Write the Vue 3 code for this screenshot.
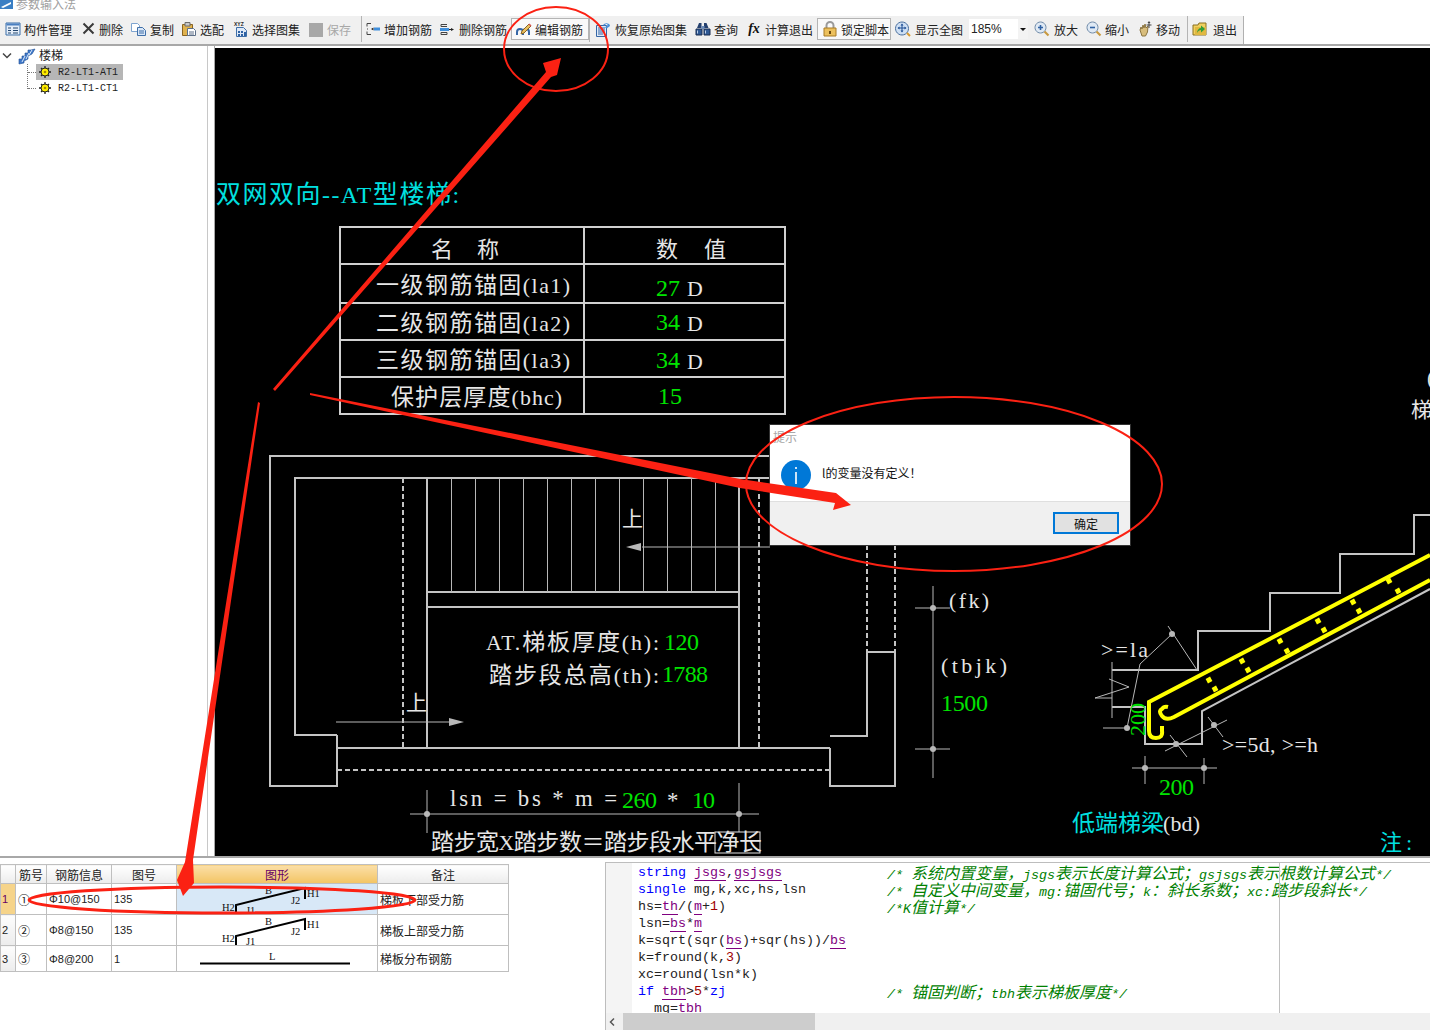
<script setup>
// icon shapes on a 16px grid: d = path, f = fill, s = stroke, w = stroke width
const icons = {
  manage: [
    { d: 'M1 2h14v12H1z', f: '#e4edf8', s: '#3a6ea8' },
    { d: 'M1.5 2.5h13v2h-13z', f: '#4a7fc0' },
    { d: 'M3 7h3M3 9.5h3M3 12h3M8 7h5M8 9.5h5M8 12h5', s: '#23466f' }
  ],
  del: [{ d: 'M2.5 2.5l10 10M12.5 2.5l-10 10', s: '#3a3a3a', w: 2 }],
  copy: [
    { d: 'M.5 2.5h6l2 2v6h-8z', f: '#fff', s: '#7ea4d0' },
    { d: 'M6.5 6.5h5l3 3v5h-8z', f: '#d9e7f8', s: '#3f6fa8' },
    { d: 'M8 10h5M8 12h5', s: '#3f6fa8' }
  ],
  pick: [
    { d: 'M1.5 3.5h10v11h-10z', f: '#e0b24e', s: '#8a6420' },
    { d: 'M4 1.5h5v3.5H4z', f: '#c9c9c9', s: '#6d6d6d' },
    { d: 'M6.5 7.5h6l2 2v5h-8z', f: '#fff', s: '#5c6f88' },
    { d: 'M8 11h5M8 13h5', s: '#5c6f88' }
  ],
  atlas: [
    { d: 'M3.5 6.5h7l3 3v6h-10z', f: '#dfe9f6', s: '#3f6fa8' },
    { d: 'M5 10h2v2H5zM8 10h2v2H8zM5 13h2v2H5zM8 13h2v2H8zM11 11h2v4h-2z', f: '#2f62a4' }
  ],
  save: [{ d: 'M1 2h14v14H1z', f: '#a8a8a8' }],
  addBar: [
    { d: 'M6 2.500H2v3M2 10.500v3h4M2 8h1', s: '#444' },
    { d: 'M6 8l2.500-1.500v3z', f: '#222' },
    { d: 'M9 6.500h6v3H9z', f: '#3f8fdc' }
  ],
  delBar: [
    { d: 'M9 3.500H3v2h6M3 11.500h6v2H3z', s: '#444' },
    { d: 'M2 7h9v3H2z', f: '#3f8fdc' },
    { d: 'M11 8.500h3', s: '#222' },
    { d: 'M16 8.500l-3-1.500v3z', f: '#222' }
  ],
  edit: [
    { d: 'M1 14v-3a3 3 0 0 1 6 0v3M7 14v-3a3 3 0 0 1 6 0v3', s: '#3566a6', w: 2 },
    { d: 'M6 10l7-7 2 2-7 7-3 1z', f: '#e8c060', s: '#8a6420' },
    { d: 'M12.500 3.500l1-1 2 2-1 1z', f: '#d9534f' }
  ],
  restore: [
    { d: 'M1.500 4.500h10v11h-10z', f: '#dfe9f6', s: '#3566a6' },
    { d: 'M3 7h7M3 9h7M3 11h7M3 13h5', s: '#3566a6' },
    { d: 'M8 4a4 3.500 0 0 1 7 0c0 2-2 2-3 3.500l-2-1c1-1.500 2.500-1.500 2.500-2.500 0-1.500-2.500-1-2.500.5z', f: '#4a90d9' }
  ],
  search: [
    { d: 'M2 7l2-5h2.500v5M13.500 7l-2-5H9v5', f: '#24406e' },
    { d: 'M1 8h6v6H1zM9 8h6v6H9z', f: '#2e5894', s: '#1a2f52' },
    { d: 'M6.500 5h3v3h-3z', f: '#6c8cb8' },
    { d: 'M2.500 9.500v3M10.500 9.500v3', s: '#bcd0ea' }
  ],
  lock: [
    { d: 'M4.500 7V4.500a3.500 3.500 0 0 1 7 0V7', s: '#9a9a9a', w: 2 },
    { d: 'M2 7h12v8H2z', f: '#ecc05c', s: '#a87a24' },
    { d: 'M7 10h2v3H7z', f: '#6a4a10' }
  ],
  full: [
    { d: 'M7 1a6.500 6.500 0 1 0 .01 0z', f: '#cfe0f4', s: '#4a6f9e' },
    { d: 'M7 3.500v7M3.500 7h7', s: '#1f4f94' },
    { d: 'M7 2.500l1.500 2h-3zM7 11.500l1.500-2h-3zM2.500 7l2-1.500v3zM11.500 7l-2-1.500v3z', f: '#1f4f94' },
    { d: 'M12 12l3 3', s: '#d89a30', w: 2 }
  ],
  zoomIn: [
    { d: 'M6.500 1a5.500 5.500 0 1 0 .01 0z', f: '#dfe9f4', s: '#6f8aa8' },
    { d: 'M4 6.500h5M6.500 4v5', s: '#2f62a4', w: 1.600 },
    { d: 'M10.500 10.500l4 4', s: '#c99a40', w: 2.200 }
  ],
  zoomOut: [
    { d: 'M6.500 1a5.500 5.500 0 1 0 .01 0z', f: '#dfe9f4', s: '#6f8aa8' },
    { d: 'M4 6.500h5', s: '#2f62a4', w: 1.600 },
    { d: 'M10.500 10.500l4 4', s: '#c99a40', w: 2.200 }
  ],
  move: [
    { d: 'M3 9l1-3 1 2 1-4 1 3 1-4 1 4 2-2-.5 6-2 4H5z', f: '#d8bd7c', s: '#8a7440' },
    { d: 'M12 1v6M9.500 4h5', s: '#444' },
    { d: 'M12 0l1.500 2h-3z', f: '#444' }
  ],
  quit: [
    { d: 'M1 4h5l1-2h7v12H1z', f: '#f0d060', s: '#8a7020' },
    { d: 'M3 6h11v8H3z', f: '#e0b840' },
    { d: 'M5 12c0-3 2-5 4-5V4.500L13 8l-4 3.500V9c-1.500 0-3 1-4 3z', f: '#2f9e3a' }
  ]
}

const tools = [
  { label: '构件管理', icon: 'manage', w: 76 },
  { label: '删除', icon: 'del', w: 50, gap: 2 },
  { label: '复制', icon: 'copy', w: 50 },
  { label: '选配', icon: 'pick', w: 52 },
  { label: '选择图集', icon: 'atlas', w: 75, tag: 'XYZ' },
  { label: '保存', icon: 'save', w: 53, off: true },
  { sep: true, w: 4 },
  { label: '增加钢筋', icon: 'addBar', w: 73 },
  { label: '删除钢筋', icon: 'delBar', w: 73, gap: 5 },
  { label: '编辑钢筋', icon: 'edit', w: 78, on: true },
  { sep: true, w: 6 },
  { label: '恢复原始图集', icon: 'restore', w: 100, gap: 4 },
  { label: '查询', icon: 'search', w: 51 },
  { label: '计算退出', w: 71, fx: true },
  { label: '锁定脚本', icon: 'lock', w: 74, on: true },
  { label: '显示全图', icon: 'full', w: 74, ml: 4, gap: 4 },
  { combo: '185%', w: 59 },
  { label: '放大', icon: 'zoomIn', w: 52, ml: 6, gap: 4 },
  { label: '缩小', icon: 'zoomOut', w: 51 },
  { label: '移动', icon: 'move', w: 50 },
  { sep: true, w: 5 },
  { label: '退出', icon: 'quit', w: 51, gap: 5 }
]

const bars = [
  { no: 1, mark: '①', info: 'Φ10@150', code: '135', shape: 'bent', note: '梯板下部受力筋', active: true },
  { no: 2, mark: '②', info: 'Φ8@150', code: '135', shape: 'bent', note: '梯板上部受力筋' },
  { no: 3, mark: '③', info: 'Φ8@200', code: '1', shape: 'line', note: '梯板分布钢筋' }
]

// [text, token class]
const code = [
  { t: [['string ', 'k'], ['jsgs', 'v'], [','], ['gsjsgs', 'v']], c: '/* 系统内置变量，jsgs表示长度计算公式；gsjsgs表示根数计算公式*/' },
  { t: [['single ', 'k'], ['mg,k,xc,hs,lsn']], c: '/* 自定义中间变量，mg:锚固代号；k：斜长系数；xc:踏步段斜长*/' },
  { t: [['hs='], ['th', 'v'], ['/('], ['m', 'v'], ['+'], ['1', 'n'], [')']], c: '/*K值计算*/' },
  { t: [['lsn='], ['bs', 'v'], ['*'], ['m', 'v']] },
  { t: [['k=sqrt(sqr('], ['bs', 'v'], [')+sqr(hs))/'], ['bs', 'v']] },
  { t: [['k=fround(k,'], ['3', 'n'], [')']] },
  { t: [['xc=round(lsn*k)']] },
  { t: [['if ', 'k'], ['tbh', 'v'], ['>'], ['5', 'n'], ['*'], ['zj', 'k']], c: '/* 锚固判断；tbh表示梯板厚度*/' },
  { t: [['  mg='], ['tbh', 'p']] }
]

// text mixes narrow latin with wider CJK, odd pieces are the CJK runs
const pieces = (text) => text.split(/([\u3000-\u9fff\uff00-\uffef]+)/)

const WHITE = '#e6e6e6'
const GREEN = '#00e400'
const CYAN = '#00e0e0'

// drawing text: text, x, baseline, fitted width, colour, size
const labels = [
  ['双网双向--AT型楼梯:', 216, 203, 243, CYAN, 25],
  ['名', 431, 257, 22, WHITE, 22],
  ['称', 477, 257, 22, WHITE, 22],
  ['数', 656, 257, 22, WHITE, 22],
  ['值', 704, 257, 22, WHITE, 22],
  ['一级钢筋锚固(la1)', 376, 293, 194, WHITE, 23],
  ['二级钢筋锚固(la2)', 376, 331, 194, WHITE, 23],
  ['三级钢筋锚固(la3)', 376, 368, 194, WHITE, 23],
  ['保护层厚度(bhc)', 391, 405, 171, WHITE, 23],
  ['27', 656, 296, 24, GREEN, 24],
  ['D', 687, 296, 12, WHITE, 23],
  ['34', 656, 330, 24, GREEN, 24],
  ['D', 687, 331, 12, WHITE, 23],
  ['34', 656, 368, 24, GREEN, 24],
  ['D', 687, 369, 12, WHITE, 23],
  ['15', 658, 404, 24, GREEN, 24],
  ['上', 622, 526, 21, WHITE, 21],
  ['上', 406, 710, 21, WHITE, 21],
  ['AT.梯板厚度(h):', 486, 650, 173, WHITE, 23],
  ['120', 664, 650, 35, GREEN, 24],
  ['踏步段总高(th):', 489, 683, 170, WHITE, 23],
  ['1788', 662, 682, 46, GREEN, 24],
  ['lsn = bs * m =', 450, 806, 167, WHITE, 24],
  ['260', 622, 808, 35, GREEN, 24],
  ['*', 667, 808, 12, WHITE, 24],
  ['10', 692, 808, 23, GREEN, 24],
  ['踏步宽X踏步数＝踏步段水平净长', 431, 850, 331, WHITE, 23],
  ['(fk)', 949, 608, 40, WHITE, 23],
  ['(tbjk)', 941, 673, 66, WHITE, 23],
  ['1500', 941, 711, 47, GREEN, 24],
  ['>=la', 1101, 657, 47, WHITE, 23],
  ['>=5d, >=h', 1222, 752, 96, WHITE, 23],
  ['200', 1159, 795, 35, GREEN, 24],
  ['低端梯梁', 1072, 831, 92, CYAN, 23],
  ['(bd)', 1163, 831, 37, WHITE, 23],
  ['注:', 1380, 850, 32, CYAN, 22],
  ['(', 1427, 385, 8, WHITE, 22],
  ['梯', 1411, 417, 20, WHITE, 21]
]

// plan and section outlines
const heavy = [
  '337,735 295,735 295,478 895,478',
  '337,735 337,786 270,786 270,456 895,456',
  '337,748 830,748',
  '427,478 427,748',
  '739,478 739,748',
  '427,592 739,592',
  '427,607 739,607',
  '830,748 830,786 895,786 895,652 867,652 867,736 830,736',
  '1112,670 1198,670 1198,631 1270,631 1270,593 1340,593 1340,554 1414,554 1414,515 1430,515',
  '1112,707 1145,707 1145,744 1202,744 1202,711 1430,589'
]
const dashed = [
  '403,478 403,748',
  '759,478 759,748',
  '759,748 830,748',
  '337,770 830,770',
  '867,545 867,652',
  '895,545 895,652'
]
const thin = [
  '642,547 770,547',
  '336,722 450,722',
  '427,790 427,833',
  '739,783 739,832',
  '410,814 759,814',
  '933,586 933,778',
  '915,608 950,608',
  '915,749 950,749',
  '1172,634 1140,664 1127,728',
  '1168,626 1197,670',
  '1103,728 1127,728',
  '1112,662 1112,718',
  '1109,679 1129,687 1095,698 1112,698',
  '1165,751 1227,720',
  '1170,735 1187,757',
  '1208,717 1223,737',
  '1132,768 1217,768',
  '1145,756 1145,784',
  '1204,758 1204,784'
]
const dots = [[427, 814], [739, 814], [933, 608], [933, 749], [1172, 634], [1127, 728], [1176, 744], [1214, 725], [1145, 768], [1204, 768]]
const treads = Array.from({ length: 12 }, (_, i) => 451.5 + i * 24)
const ties = [
  [1209, 680], [1215, 689], [1242, 661], [1248, 670], [1280, 641], [1287, 651],
  [1318, 621], [1324, 630], [1353, 602], [1359, 611], [1389, 581], [1398, 591]
]
</script>

<template>
  <div class="app">
    <div class="title-bar">
      <svg class="app-icon" width="13" height="9" viewBox="0 0 13 9">
        <path d="M0 0h13v9H0z" fill="#3b7fc4" />
        <path d="M1 7L11 2v2L3 8z" fill="#fff" />
      </svg>
      <span>参数输入法</span>
    </div>

    <div class="toolbar-wrap">
      <div class="toolbar">
        <template v-for="(tool, i) in tools" :key="i">
          <div v-if="tool.sep" class="sep" :style="{ width: tool.w + 'px' }"><i></i></div>
          <div v-else-if="tool.combo" class="combo" :style="{ width: tool.w + 'px' }">
            <span class="combo-val">{{ tool.combo }}</span>
            <span class="combo-btn"></span>
          </div>
          <div
            v-else
            class="tool"
            :class="{ on: tool.on, off: tool.off }"
            :style="{ width: tool.w + 'px', marginLeft: (tool.ml || 0) + 'px', gap: (tool.gap || 3) + 'px' }"
          >
            <span v-if="tool.fx" class="fx">fx</span>
            <svg v-else class="icon" width="16" height="16" viewBox="0 0 16 16">
              <path
                v-for="(p, n) in icons[tool.icon]"
                :key="n"
                :d="p.d"
                :fill="p.f || 'none'"
                :stroke="p.s || 'none'"
                :stroke-width="p.w || 1"
              />
              <text v-if="tool.tag" x="1" y="5" class="icon-tag">{{ tool.tag }}</text>
            </svg>
            <span>{{ tool.label }}</span>
          </div>
        </template>
      </div>
    </div>

    <div class="main">
      <aside class="tree">
        <div class="tree-root">
          <svg width="10" height="8" viewBox="0 0 10 8" class="chev"><path d="M1 1.500l4 4 4-4" fill="none" stroke="#444" stroke-width="1.500" /></svg>
          <svg width="18" height="17" viewBox="0 0 18 17">
            <path d="M1 16V11h3V8h3V5h3V2h3l4-1-3 5-4 2v3l-4 2v2z" fill="#3f78c9" stroke="#1f4f94" stroke-width=".6" />
            <path d="M4 14l3-6M8 11l3-6M11 7l3-5" stroke="#dce9f8" fill="none" />
          </svg>
          <span class="root-name">楼梯</span>
        </div>
        <div class="tree-kids">
          <div class="tree-node" v-for="(name, i) in ['R2-LT1-AT1', 'R2-LT1-CT1']" :key="name" :class="{ sel: i === 0 }">
            <svg width="12" height="12" viewBox="0 0 12 12">
              <path d="M6 0v12M0 6h12M2 2l8 8M10 2l-8 8" stroke="#222" stroke-width="1.300" />
              <circle cx="6" cy="6" r="4" fill="#ffee00" stroke="#222" />
              <circle cx="6" cy="6" r="1.300" fill="#a58a00" />
            </svg>
            <span>{{ name }}</span>
          </div>
        </div>
      </aside>

      <div class="canvas">
        <svg class="drawing" width="1215" height="808" viewBox="215 48 1215 808">
          <g fill="none" stroke="#c4c4c4" stroke-width="2">
            <polyline v-for="p in heavy" :key="p" :points="p" />
          </g>
          <g fill="none" stroke="#c4c4c4" stroke-width="2" stroke-dasharray="5 3">
            <polyline v-for="p in dashed" :key="p" :points="p" />
          </g>
          <g fill="none" stroke="#b8b8b8">
            <polyline v-for="p in thin" :key="p" :points="p" />
            <line v-for="x in treads" :key="x" :x1="x" y1="478" :x2="x" y2="592" />
          </g>
          <circle v-for="d in dots" :key="d[0] + '-' + d[1]" :cx="d[0]" :cy="d[1]" r="3" fill="#b8b8b8" />
          <path d="M626 547l15-4v8zM464 722l-15-4v8z" fill="#b8b8b8" />

          <g fill="none" stroke="#d0d0d0" stroke-width="2">
            <rect x="340" y="227" width="445" height="187" />
            <path d="M584 227V414M340 264H785M340 303H785M340 340H785M340 377H785" />
          </g>
          <rect x="715" y="832" width="45" height="21" fill="none" stroke="#e6e6e6" />

          <g fill="none" stroke="#ffff00" stroke-width="4">
            <path d="M1430 555L1149 702V731Q1149 738 1156 738T1162 731V726" />
            <path d="M1430 580L1174 717Q1166 721 1162 716T1162 709Q1164 706 1168 707" />
          </g>
          <rect
            v-for="t in ties"
            :key="t[0]"
            :x="t[0] - 2.500"
            :y="t[1] - 2.500"
            width="5"
            height="5"
            fill="#ffff00"
            :transform="`rotate(-28 ${t[0]} ${t[1]})`"
          />

          <text
            v-for="(l, i) in labels"
            :key="i"
            class="cad"
            :x="l[1]"
            :y="l[2]"
            :textLength="l[3]"
            lengthAdjust="spacing"
            :fill="l[4]"
            :font-size="l[5]"
          ><tspan v-for="(s, n) in pieces(l[0])" :key="n" :class="{ latin: n % 2 === 0 && l[4] !== GREEN }">{{ s }}</tspan></text>
          <text class="cad" transform="translate(1145 736) rotate(-90)" textLength="33" lengthAdjust="spacingAndGlyphs" fill="#00e400" font-size="22">200</text>
        </svg>
      </div>
    </div>

    <div class="hsplit"></div>

    <div class="bottom">
      <div class="grid-pane">
        <table class="grid">
          <colgroup>
            <col style="width: 15px" /><col style="width: 31px" /><col style="width: 65px" />
            <col style="width: 65px" /><col style="width: 201px" /><col style="width: 131px" />
          </colgroup>
          <thead>
            <tr>
              <th></th><th>筋号</th><th>钢筋信息</th><th>图号</th><th class="cur">图形</th><th>备注</th>
            </tr>
          </thead>
          <tbody>
            <tr v-for="r in bars" :key="r.no" :class="'row' + r.no">
              <th class="rowno" :class="{ cur: r.active }">{{ r.no }}</th>
              <td>{{ r.mark }}</td>
              <td class="num">{{ r.info }}</td>
              <td class="num">{{ r.code }}</td>
              <td class="shape" :class="{ picked: r.active }">
                <svg v-if="r.shape === 'bent'" width="200" height="30" viewBox="0 0 200 30">
                  <path d="M59 30V21L128 4V15" fill="none" stroke="#000" stroke-width="2" />
                  <text class="fig" x="45" y="27">H2</text>
                  <text class="fig" x="69" y="30">J1</text>
                  <text class="fig" x="88" y="10">B</text>
                  <text class="fig" x="114" y="20">J2</text>
                  <text class="fig" x="130" y="13">H1</text>
                </svg>
                <svg v-else width="200" height="25" viewBox="0 0 200 25">
                  <path d="M23 17.500H173" stroke="#000" stroke-width="2" />
                  <text class="fig" x="92" y="14">L</text>
                </svg>
              </td>
              <td class="note">{{ r.note }}</td>
            </tr>
          </tbody>
        </table>
      </div>

      <div class="code-pane">
        <div class="code-body">
          <div class="gutter"></div>
          <div class="code">
            <div v-for="(line, i) in code" :key="i" class="line">
              <div class="src"><span v-for="(tok, n) in line.t" :key="n" :class="tok[1]">{{ tok[0] }}</span></div>
              <div v-if="line.c" class="cmt"><span v-for="(s, n) in pieces(line.c)" :key="n" :class="{ cn: n % 2 === 1 }">{{ s }}</span></div>
            </div>
          </div>
          <i class="margin-line"></i>
        </div>
        <div class="hscroll">
          <svg width="8" height="10" viewBox="0 0 8 10"><path d="M6 1.500L2.500 5 6 8.500" fill="none" stroke="#555" stroke-width="1.500" /></svg>
          <div class="thumb"></div>
        </div>
      </div>
    </div>

    <div class="dialog">
      <div class="dlg-body">
        <div class="dlg-title">提示</div>
        <div class="dlg-msg">
          <svg width="30" height="30" viewBox="0 0 30 30">
            <circle cx="15" cy="15" r="15" fill="#0078d7" />
            <path d="M15 7v2M15 12v12" stroke="#fff" stroke-width="1.600" />
          </svg>
          <span class="dlg-text">l的变量没有定义！</span>
        </div>
      </div>
      <div class="dlg-foot"><button class="dlg-btn">确定</button></div>
    </div>

    <!-- hand drawn red marks on top of the whole screenshot -->
    <svg class="marks" width="1430" height="1030" viewBox="0 0 1430 1030">
      <g fill="none" stroke="#fb2113">
        <ellipse cx="556" cy="49" rx="52" ry="42" stroke-width="2" />
        <ellipse cx="954" cy="484" rx="208" ry="87" stroke-width="2" />
        <ellipse cx="222" cy="900" rx="193" ry="13" stroke-width="3" />
      </g>
      <g fill="#fb2113">
        <path d="M273 389L546 72 543 63 561 58 557 75 551 77 275 391z" />
        <path d="M258 402L185 862 177 880 183 896 194 883 193 860 260 403z" />
        <path d="M310 393L740 479 836 493 851 505 833 510 835 503 740 488 310 395z" />
      </g>
    </svg>
  </div>
</template>

<style>
body {
  background: #fff;
}
</style>

<style scoped>
.app {
  position: relative;
  width: 1430px;
  height: 1030px;
  overflow: hidden;
  display: flex;
  flex-direction: column;
  font-family: "Noto Sans CJK SC", "Liberation Sans", sans-serif;
  font-size: 12px;
  color: #222;
  background: #fff;
}

.title-bar {
  height: 16px;
  flex-shrink: 0;
  display: flex;
  align-items: flex-start;
  gap: 3px;
  overflow: hidden;
  line-height: 8px;
  color: #a0a0a0;
}

.toolbar-wrap {
  height: 28px;
  flex-shrink: 0;
  border-bottom: 2px solid #a8a8a8;
}

.toolbar {
  width: 1238px;
  height: 26px;
  padding: 0 0 2px 5px;
  background: #f0f0f0;
  border-right: 1px solid #b0b0b0;
  display: flex;
  align-items: center;
}

.tool {
  display: flex;
  align-items: center;
  height: 22px;
  flex-shrink: 0;
  white-space: nowrap;
  box-sizing: border-box;
}

.tool.on {
  border: 1px solid #b4b4b4;
  background: #f9f9f9;
  padding-left: 4px;
}

.tool.off {
  color: #a8a8a8;
}

.icon {
  flex-shrink: 0;
}

.icon-tag {
  font: bold 5px "Liberation Sans", sans-serif;
  fill: #222;
}

.fx {
  width: 16px;
  text-align: center;
  font: italic bold 14px "Liberation Serif", serif;
  color: #111;
}

.sep {
  height: 26px;
  flex-shrink: 0;
  display: flex;
}

.sep i {
  width: 1px;
  height: 100%;
  background: #b4b4b4;
}

.combo {
  height: 20px;
  flex-shrink: 0;
  background: #fff;
  display: flex;
  align-items: center;
  justify-content: space-between;
  font-family: "Liberation Sans", sans-serif;
}

.combo-val {
  padding-left: 2px;
}

.combo-btn {
  width: 10px;
  height: 100%;
  position: relative;
  background: #f3f3f3;
}

.combo-btn::after {
  content: "";
  position: absolute;
  left: 2px;
  top: 9px;
  border: 3px solid transparent;
  border-top-color: #111;
}

.main {
  height: 810px;
  flex-shrink: 0;
  display: flex;
}

.tree {
  width: 208px;
  flex-shrink: 0;
  padding-top: 2px;
  box-sizing: border-box;
  border-right: 1px solid #c8c8c8;
}

.tree-root {
  display: flex;
  align-items: center;
  height: 16px;
  padding-left: 2px;
  gap: 3px;
}

.chev {
  margin: -1px 3px 0 0;
}

.root-name {
  margin-top: -3px;
}

.tree-kids {
  margin-left: 27px;
  border-left: 1px dotted #777;
  height: 25px;
  position: relative;
}

.tree-node {
  display: flex;
  align-items: center;
  gap: 7px;
  width: 87px;
  height: 16px;
  margin-left: 8px;
  padding-left: 3px;
  box-sizing: border-box;
  font: 10px "Liberation Mono", monospace;
  position: relative;
  white-space: nowrap;
}

.tree-node.sel {
  background: #b6b6b6;
}

.tree-node::before {
  content: "";
  position: absolute;
  left: -8px;
  top: 8px;
  width: 8px;
  border-top: 1px dotted #777;
}

.canvas {
  flex: 1;
  margin-left: 6px;
  padding: 2px 0 0 0;
  border-left: 1px solid #a8a8a8;
  background: #fff;
  overflow: hidden;
}

.drawing {
  display: block;
  background: #000;
}

.cad {
  font-family: "Liberation Serif", "Noto Sans CJK SC", serif;
}

.latin {
  font-family: "Liberation Serif", serif;
  font-size: .95em;
}

.hsplit {
  height: 6px;
  flex-shrink: 0;
  border-top: 2px solid #a8a8a8;
  box-sizing: border-box;
}

.bottom {
  flex: 1;
  display: flex;
  min-height: 0;
}

.grid-pane {
  width: 603px;
  flex-shrink: 0;
  padding-top: 2px;
  box-sizing: border-box;
}

.grid {
  table-layout: fixed;
  width: 508px;
  border-collapse: collapse;
  font-size: 12px;
}

.grid th,
.grid td {
  border: 1px solid #bfbfbf;
  padding: 0;
  font-weight: 400;
  overflow: hidden;
  white-space: nowrap;
}

.grid thead th {
  height: 18px;
  text-align: center;
  background: linear-gradient(#ffffff, #ececec);
}

.grid thead th.cur {
  color: #660066;
  background: linear-gradient(#fbdfa8, #f3c463);
}

.rowno {
  background: linear-gradient(#fdfdfd, #ececec);
  text-align: left;
  padding-left: 1px !important;
  font-family: "Liberation Sans", sans-serif;
  font-size: 11px;
}

.rowno.cur {
  background: #f6d48a;
  color: #660066;
}

.row1 td,
.row1 th,
.row2 td,
.row2 th {
  height: 30px;
}

.row3 td,
.row3 th {
  height: 25px;
}

.grid td {
  padding-left: 2px;
}

.grid td.num {
  font: 11px "Liberation Sans", sans-serif;
  padding-left: 2px;
}

.grid td.shape {
  padding: 0;
  line-height: 0;
}

.picked {
  background: #d8e8f7;
}

.fig {
  font: 10.5px "Liberation Serif", serif;
  fill: #111;
}

.code-pane {
  flex: 1;
  margin-left: 2px;
  min-width: 0;
  display: flex;
  flex-direction: column;
  border-left: 1px solid #bdbdbd;
  border-top: 1px solid #bdbdbd;
}

.code-body {
  position: relative;
  flex: 1;
  min-height: 0;
  display: flex;
  overflow: hidden;
}

.gutter {
  width: 26px;
  flex-shrink: 0;
  background: #f4f4f4;
}

.code {
  padding: 1px 0 0 6px;
  font: 13.33px/17px "Liberation Mono", "Noto Sans CJK SC", monospace;
  color: #222;
  white-space: pre;
}

.line {
  display: flex;
  height: 17px;
}

.src {
  width: 249px;
  flex-shrink: 0;
}

.k {
  color: #0000ff;
}

.v {
  color: #800080;
  border-bottom: 1px solid #800080;
}

.p {
  color: #800080;
}

.n {
  color: #a00000;
}

.cmt {
  color: #008000;
  font-style: italic;
}

.cn {
  font-family: "Noto Sans CJK SC", sans-serif;
  font-size: 16px;
  line-height: 17px;
}

.margin-line {
  position: absolute;
  left: 673px;
  top: 0;
  bottom: 0;
  width: 1px;
  background: #c0c0c0;
}

.hscroll {
  height: 17px;
  flex-shrink: 0;
  background: #f0f0f0;
  display: flex;
  align-items: center;
  padding-left: 2px;
  gap: 7px;
}

.thumb {
  width: 192px;
  height: 100%;
  background: #cdcdcd;
}

.dialog {
  position: absolute;
  left: 769px;
  top: 424px;
  width: 362px;
  height: 122px;
  box-sizing: border-box;
  border: 1px solid #333;
  background: #fff;
  display: flex;
  flex-direction: column;
}

.dlg-body {
  flex: 1;
  padding: 4px 0 0 3px;
}

.dlg-title {
  color: #a8a8a8;
  line-height: 16px;
}

.dlg-msg {
  display: flex;
  align-items: center;
  gap: 11px;
  margin: 15px 0 0 8px;
  color: #111;
}

.dlg-text {
  margin-top: -5px;
}

.dlg-foot {
  height: 44px;
  box-sizing: border-box;
  border-top: 1px solid #dfdfdf;
  background: #f0f0f0;
  display: flex;
  justify-content: flex-end;
  align-items: flex-start;
  padding: 10px 11px 0 0;
}

.dlg-btn {
  width: 66px;
  height: 22px;
  border: 2px solid #0078d7;
  background: #e1e1e1;
  font: inherit;
  color: #111;
  padding: 0;
}

.marks {
  position: absolute;
  left: 0;
  top: 0;
  pointer-events: none;
}
</style>
